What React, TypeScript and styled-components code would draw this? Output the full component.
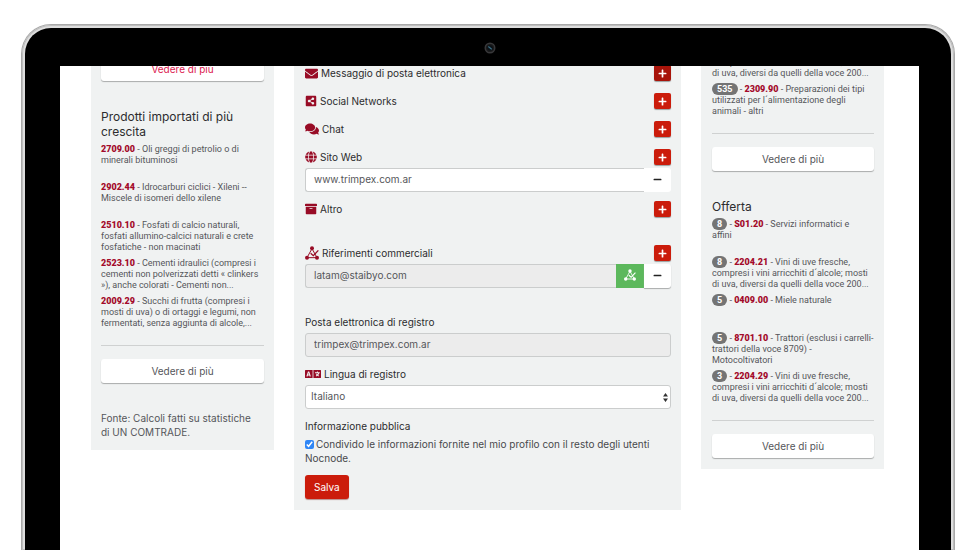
import React, { ReactNode } from "react";
import styled, { createGlobalStyle } from "styled-components";
import {
  FaArchive,
  FaComments,
  FaEnvelope,
  FaGlobe,
  FaLanguage,
  FaMinus,
  FaPlus,
  FaShareAltSquare,
} from "react-icons/fa";

const color = {
  panel: "#f0f2f2",
  wine: "#a30a2a",
  icon: "#980c26",
  red: "#cb1c0b",
  redDark: "#a8140a",
  green: "#5cb85c",
  text: "#55565a",
  heading: "#2c2c2e",
  line: "#cfd1d1",
};

const GlobalStyle = createGlobalStyle`
  *, *::before, *::after { box-sizing: border-box; }
  html, body, #root { height: 100%; }
  body {
    margin: 0;
    background: #fff;
    color: ${color.heading};
    font: 10px/14px Inter, "Open Sans", sans-serif;
    overflow: hidden;
  }
  button, input, select { font: inherit; color: inherit; }
  button { cursor: pointer; }
`;

const Page = styled.main`
  height: 100vh;
  padding: 24px 21px 0;
  overflow: hidden;
`;

const Shell = styled.div`
  height: 100%;
  padding: 1px 1px 0;
  border-radius: 30px 30px 0 0;
  background: #a9a9a9;
`;

const Rim = styled.div`
  height: 100%;
  padding: 3px 3px 0;
  border-radius: 29px 29px 0 0;
  background: #dedede;
  box-shadow: inset 0 0 0 1px #bdbdbd;
`;

const Bezel = styled.div`
  display: flex;
  flex-direction: column;
  height: 100%;
  padding: 0 32px 0 35px;
  border-radius: 26px 26px 0 0;
  background: #000;
`;

const CameraBar = styled.div`
  display: flex;
  flex: none;
  align-items: center;
  justify-content: center;
  height: 38px;
  padding-top: 2px;
`;

const Screen = styled.div`
  flex: 1;
  min-height: 0;
  overflow: hidden;
  background: #fff;
`;

const Columns = styled.div`
  display: grid;
  grid-template-columns: 183fr 387fr 183fr;
  gap: 20px;
  align-items: start;
  margin-top: -33px;
  padding: 0 35px 0 31px;
`;

const Panel = styled.section<{ $top?: number; $left?: number }>`
  min-width: 0;
  padding: ${(p) => p.$top ?? 10}px 10px 11px ${(p) => p.$left ?? 10}px;
  background: ${color.panel};
`;

const Title = styled.h2`
  margin: 28px 0 5px;
  font-size: 12px;
  font-weight: 400;
  line-height: 15px;
  white-space: pre-line;
`;

const List = styled.ul`
  display: grid;
  grid-auto-rows: 33px;
  gap: 5px;
  margin: 0;
  padding: 0;
  list-style: none;
`;

const Item = styled.li`
  color: ${color.text};
  font-family: Roboto, Inter, sans-serif;
  font-size: 9px;
  line-height: 11px;
  white-space: pre-line;
`;

const Code = styled.strong`
  color: ${color.wine};
  font-weight: 900;
`;

const Badge = styled.span`
  padding: 1px 5px;
  border-radius: 7px;
  background: #747474;
  color: #fff;
  font-weight: 700;
`;

const Divider = styled.hr`
  height: 1px;
  margin: 16px 0 13px;
  border: 0;
  background: ${color.line};

  &:first-child { margin-top: 0; }
`;

const MoreButton = styled.button<{ $active?: boolean }>`
  display: block;
  width: 100%;
  height: 24px;
  padding: 0 0 1px;
  border: 0;
  border-radius: 3px;
  background: #fff;
  box-shadow: 0 1px 1px #a9abab;
  color: ${(p) => (p.$active ? "#dc2150" : color.text)};
`;

const Source = styled.p`
  margin: 28px 0 0;
  color: ${color.text};
  white-space: pre-line;
`;

const Row = styled.div<{ $gap?: number }>`
  display: flex;
  align-items: center;
  justify-content: space-between;
  height: 22px;
  margin-top: ${(p) => p.$gap ?? 6}px;

  &:first-child { margin-top: 0; }
`;

const Label = styled.label`
  display: flex;
  align-items: center;
  gap: 3px;

  svg { flex: none; color: ${color.icon}; }
`;

const Caption = styled(Label).attrs({ as: "span" })``;

const AddButton = styled.button<{ $pressed?: boolean }>`
  display: grid;
  place-items: center;
  width: 17px;
  height: 16px;
  padding: 0;
  border: 0;
  border-radius: 2px;
  background: ${(p) => (p.$pressed ? color.redDark : color.red)};
  box-shadow: 0 1px 1px #9aa0a0;
  color: #fff;
`;

const Group = styled.div`
  display: flex;
  height: 24px;
`;

const Field = styled.input`
  flex: 1;
  width: 100%;
  min-width: 0;
  height: 24px;
  padding: 0 8px 2px;
  border: 1px solid #cbcdcd;
  border-radius: 3px;
  background: #fff;
  color: ${color.text};

  &:read-only { background: #ececec; }
  ${Group} & { border-right: 0; border-radius: 3px 0 0 3px; }
`;

const GroupButton = styled.button<{ $green?: boolean; $raised?: boolean }>`
  display: grid;
  place-items: center;
  width: ${(p) => (p.$green ? 28 : 27)}px;
  padding: 0 0 2px;
  border: 0;
  border-radius: ${(p) => (p.$green ? "0" : "0 3px 3px 0")};
  background: ${(p) => (p.$green ? color.green : "#fff")};
  box-shadow: ${(p) => (p.$raised ? "0 1px 1px #a9abab" : "none")};
  color: ${(p) => (p.$green ? "#fff" : "#222")};
`;

const SelectBox = styled.div`
  display: grid;
  align-items: center;

  > * { grid-area: 1 / 1; }
  > svg { justify-self: end; margin-right: 3px; pointer-events: none; }
`;

const Select = styled.select`
  width: 100%;
  height: 24px;
  padding: 0 14px 2px 5px;
  border: 1px solid #cbcdcd;
  border-radius: 3px;
  background: #fff;
  color: ${color.text};
  appearance: none;
`;

const Consent = styled.label`
  display: block;
  color: #48494c;
  white-space: pre-line;
`;

const Check = styled.input`
  width: 9px;
  height: 9px;
  margin: 0 2px 0 0;
  vertical-align: -1px;
  accent-color: #2f86f6;
`;

const SaveButton = styled.button`
  display: block;
  height: 24px;
  margin-top: 10px;
  padding: 0 9px 1px;
  border: 0;
  border-radius: 3px;
  background: ${color.red};
  box-shadow: 0 1px 1px #b9908c;
  color: #fff;
`;

function Camera() {
  return (
    <svg width="12" height="12" viewBox="0 0 12 12" aria-hidden="true">
      <circle cx="6" cy="6" r="4.8" fill="#1b1b1c" stroke="#38383a" strokeWidth="1.4" />
      <circle cx="6" cy="6" r="2.8" fill="#0b1116" />
      <path d="M4.6 4.8 7.4 7" stroke="#3b6f86" strokeWidth="1.2" strokeLinecap="round" />
    </svg>
  );
}

function NetworkIcon({ size = 14 }: { size?: number }) {
  return (
    <svg width={size} height={size} viewBox="0 0 42 42" fill="none" stroke="currentColor" aria-hidden="true">
      <path d="M21 8 6 35H36L21 8" strokeWidth="3" />
      <path d="M17 22 25 29 40 13" strokeWidth="4" />
      <g fill="currentColor" stroke="none">
        <circle cx="21" cy="7" r="6" />
        <circle cx="6" cy="35" r="6" />
        <circle cx="36" cy="35" r="6" />
      </g>
    </svg>
  );
}

type Entry = { code?: string; text: string; count?: number };

function Entries({ items }: { items: Entry[] }) {
  return (
    <List>
      {items.map((it) => (
        <Item key={it.code ?? it.text}>
          {it.count !== undefined && (
            <>
              <Badge>{it.count}</Badge>
              {" - "}
            </>
          )}
          {it.code && (
            <>
              <Code>{it.code}</Code>
              {" - "}
            </>
          )}
          {it.text}
        </Item>
      ))}
    </List>
  );
}

function AddRow({ icon, name, gap, pressed, htmlFor }: {
  icon: ReactNode; name: string; gap?: number; pressed?: boolean; htmlFor?: string;
}) {
  return (
    <Row $gap={gap}>
      {htmlFor ? <Label htmlFor={htmlFor}>{icon}{name}</Label> : <Caption>{icon}{name}</Caption>}
      <AddButton type="button" $pressed={pressed} aria-label={`Aggiungi ${name}`}>
        <FaPlus size={9} />
      </AddButton>
    </Row>
  );
}

const imported: Entry[] = [
  { code: "2709.00", text: "Oli greggi di petrolio o di\nminerali bituminosi" },
  { code: "2902.44", text: "Idrocarburi ciclici - Xileni --\nMiscele di isomeri dello xilene" },
  { code: "2510.10", text: "Fosfati di calcio naturali,\nfosfati allumino-calcici naturali e crete\nfosfatiche - non macinati" },
  { code: "2523.10", text: "Cementi idraulici (compresi i\ncementi non polverizzati detti « clinkers\n»), anche colorati - Cementi non..." },
  { code: "2009.29", text: "Succhi di frutta (compresi i\nmosti di uva) o di ortaggi e legumi, non\nfermentati, senza aggiunta di alcole,..." },
];

const wineRest = "\ncompresi i vini arricchiti d´alcole; mosti\ndi uva, diversi da quelli della voce 200...";
const wine = "Vini di uve fresche," + wineRest;

const demand: Entry[] = [
  { text: wineRest },
  { count: 535, code: "2309.90", text: "Preparazioni dei tipi\nutilizzati per l´alimentazione degli\nanimali - altri" },
];

const offer: Entry[] = [
  { count: 8, code: "S01.20", text: "Servizi informatici e\naffini" },
  { count: 8, code: "2204.21", text: wine },
  { count: 5, code: "0409.00", text: "Miele naturale" },
  { count: 5, code: "8701.10", text: "Trattori (esclusi i carrelli-\ntrattori della voce 8709) -\nMotocoltivatori" },
  { count: 3, code: "2204.29", text: wine },
];

export default function App() {
  return (
    <Page>
      <GlobalStyle />
      <Shell>
        <Rim>
          <Bezel>
            <CameraBar><Camera /></CameraBar>
            <Screen>
              <Columns>
                <Panel>
                  <Divider />
                  <MoreButton type="button" $active>Vedere di più</MoreButton>
                  <Title>{"Prodotti importati di più\ncrescita"}</Title>
                  <Entries items={imported} />
                  <Divider />
                  <MoreButton type="button">Vedere di più</MoreButton>
                  <Source>{"Fonte: Calcoli fatti su statistiche\ndi UN COMTRADE."}</Source>
                </Panel>

                <Panel as="form" $top={29} $left={11}>
                  <AddRow icon={<FaEnvelope size={13} />} name="Messaggio di posta elettronica" pressed />
                  <AddRow icon={<FaShareAltSquare size={12} />} name="Social Networks" />
                  <AddRow icon={<FaComments size={14} />} name="Chat" />
                  <AddRow icon={<FaGlobe size={12} />} name="Sito Web" htmlFor="web" />
                  <Group>
                    <Field id="web" defaultValue="www.trimpex.com.ar" />
                    <GroupButton type="button" aria-label="Rimuovi sito web"><FaMinus size={9} /></GroupButton>
                  </Group>
                  <AddRow icon={<FaArchive size={12} />} name="Altro" />
                  <AddRow icon={<NetworkIcon />} name="Riferimenti commerciali" gap={22} htmlFor="ref" />
                  <Group>
                    <Field id="ref" defaultValue="latam@staibyo.com" readOnly />
                    <GroupButton type="button" $green aria-label="Collega riferimento"><NetworkIcon size={12} /></GroupButton>
                    <GroupButton type="button" $raised aria-label="Rimuovi riferimento"><FaMinus size={9} /></GroupButton>
                  </Group>
                  <Row $gap={23}><Label htmlFor="mail">Posta elettronica di registro</Label></Row>
                  <Field id="mail" defaultValue="trimpex@trimpex.com.ar" readOnly />
                  <Row><Label htmlFor="lang"><FaLanguage size={16} />Lingua di registro</Label></Row>
                  <SelectBox>
                    <Select id="lang" defaultValue="it"><option value="it">Italiano</option></Select>
                    <svg width="5" height="9" viewBox="0 0 5 9" fill="#333" aria-hidden="true">
                      <path d="M2.5 0 5 3.6H0zM2.5 9 0 5.4h5z" />
                    </svg>
                  </SelectBox>
                  <Row><Caption>Informazione pubblica</Caption></Row>
                  <Consent>
                    <Check type="checkbox" defaultChecked />
                    {"Condivido le informazioni fornite nel mio profilo con il resto degli utenti\nNocnode."}
                  </Consent>
                  <SaveButton type="button">Salva</SaveButton>
                </Panel>

                <Panel $top={13} $left={11}>
                  <Entries items={demand} />
                  <Divider />
                  <MoreButton type="button">Vedere di più</MoreButton>
                  <Title>Offerta</Title>
                  <Entries items={offer} />
                  <Divider />
                  <MoreButton type="button">Vedere di più</MoreButton>
                </Panel>
              </Columns>
            </Screen>
          </Bezel>
        </Rim>
      </Shell>
    </Page>
  );
}
